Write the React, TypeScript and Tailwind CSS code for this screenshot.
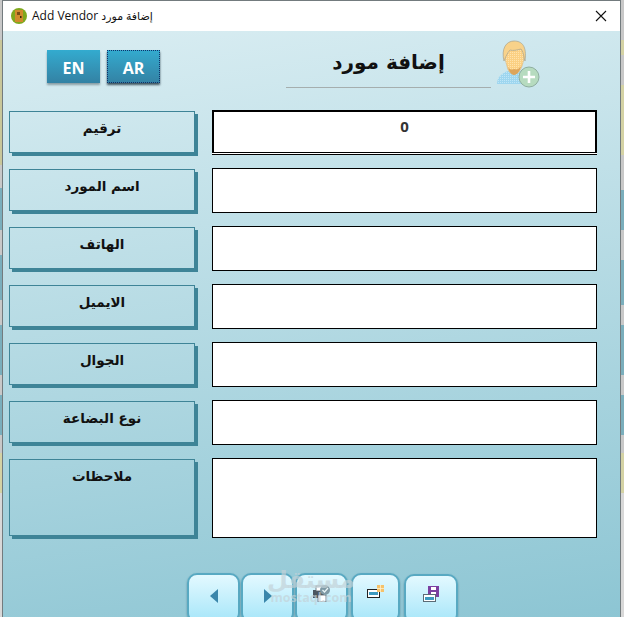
const rows = [
  { label: "ترقيم", value: "0" },
  { label: "اسم المورد", value: "" },
  { label: "الهاتف", value: "" },
  { label: "الايميل", value: "" },
  { label: "الجوال", value: "" },
  { label: "نوع البضاعة", value: "" },
];

const arabic = "font-['DejaVu_Sans',sans-serif]";

const PersonAdd = () => (
  <svg width="46" height="48" viewBox="0 0 46 48" className="block">
    <defs>
      <pattern id="dots" width="2" height="2" patternUnits="userSpaceOnUse">
        <rect width="2" height="2" fill="#fbd083" />
        <rect width="1" height="1" fill="#ffe3ad" />
      </pattern>
      <pattern id="shirt" width="2" height="2" patternUnits="userSpaceOnUse">
        <rect width="2" height="2" fill="#9ed6ef" />
        <rect width="1" height="1" fill="#bfe6f7" />
      </pattern>
    </defs>
    <path d="M1 44c0-7 5-11 11-13l4-1 8 1c5 2 8 5 9 13z" fill="url(#shirt)" />
    <path d="M9 16c0-6 4-9 10-9s9 3 9 9c0 3-1 7-2 10-2 5-4 8-8 8s-6-3-7-8c-1-3-2-7-2-10z" fill="url(#dots)" stroke="#d7ad6f" strokeWidth="0.5" />
    <path d="M12 27c2 3 4 3 6 2 3 1 5 0 7-3-1 5-4 9-7 9s-5-4-6-8z" fill="#dca55c" />
    <path d="M8 21C5 9 10 1 18 1c8 0 13 5 11 20-1-2-1-8-4-12-4 1-8 2-11 1-2 2-4 6-6 11z" fill="#f8d28a" stroke="#a8a48e" strokeWidth="0.7" />
    <circle cx="33" cy="37" r="10" fill="#b6dbbf" stroke="#8fae9f" strokeWidth="1" />
    <path d="M33 31v12M27 37h12" stroke="#fff" strokeWidth="2.6" />
  </svg>
);

const PrintIcon = () => (
  <svg width="18" height="17" viewBox="0 0 18 17">
    <rect x="0" y="5" width="11" height="8" fill="#4a5660" />
    <rect x="3" y="1" width="7" height="5" fill="#fff" stroke="#59636b" strokeWidth="0.8" />
    <rect x="5" y="10" width="8" height="7" fill="#fff" stroke="#59636b" strokeWidth="0.8" />
    <circle cx="12" cy="5" r="5" fill="#7f9aa6" />
    <path d="M9.5 5l2 2 3.5-4" fill="none" stroke="#e8f4f6" strokeWidth="1.2" />
  </svg>
);

const NewIcon = () => (
  <svg width="17" height="14" viewBox="0 0 17 14">
    <rect x="0.5" y="4.5" width="12" height="8" fill="#fff" stroke="#222" />
    <rect x="2" y="7" width="9" height="3" fill="#3d9ac0" />
    <rect x="10" y="0" width="7" height="7" fill="#f5c26b" />
    <path d="M13.5 0v7M10 3.5h7" stroke="#fff0cc" strokeWidth="0.8" />
  </svg>
);

const SaveIcon = () => (
  <svg width="16" height="16" viewBox="0 0 16 16">
    <rect x="5" y="0" width="11" height="11" fill="#7b3fa0" />
    <rect x="8" y="1" width="5" height="3" fill="#fff" />
    <rect x="8" y="6" width="5" height="4" fill="#fff" />
    <rect x="0.5" y="8.5" width="12" height="7" fill="#fff" stroke="#5b6b75" />
    <rect x="2" y="11" width="9" height="3" fill="#3d9ac0" />
  </svg>
);

const LangButton = ({ text, active }: { text: string; active?: boolean }) => (
  <div className={`flex h-[33px] w-[53px] items-center justify-center bg-gradient-to-b from-[#33abcf] to-[#3382a4] pt-[3px] font-['Open_Sans',sans-serif] text-[16px] font-bold text-white ${active ? "outline-1 outline-dotted -outline-offset-1 outline-[#10306a] shadow-[0_2px_2px_#3f5560]" : "shadow-[0_2px_2px_#8a9ea5]"}`}>
    {text}
  </div>
);

const NavButton = ({ className, children }: { className: string; children: React.ReactNode }) => (
  <div className={`flex h-[50px] items-start justify-center rounded-[10px] border-2 border-[#58a9c2] bg-gradient-to-b from-[#e3f9ff] to-[#a6e6f9] pt-[10px] shadow-[0_1px_2px_#5f8d9b] ${className}`}>
    {children}
  </div>
);

const Label = ({ text, tall }: { text: string; tall?: boolean }) => (
  <div dir="rtl" className={`flex w-[186px] shrink-0 justify-center border border-[#3e8497] pt-[6px] text-[13.5px] font-bold text-[#111] shadow-[3px_3px_0_#3e8497] ${arabic} ${tall ? "h-[77px]" : "h-[42px]"}`}>
    {text}
  </div>
);

export default function App() {
  return (
    <div className="flex h-[617px] w-[624px] overflow-hidden">
      <div className="w-[2px] shrink-0 bg-[linear-gradient(to_bottom,#c8c8c8_0_40px,#c9c79a_40px_165px,#c8c8c8_165px_188px,#7aaebc_188px_230px,#c8c8c8_230px_255px,#7aaebc_255px_300px,#c8c8c8_300px_325px,#7aaebc_325px_375px,#c8c8c8_375px_395px,#7aaebc_395px_435px,#c8c8c8_435px_453px,#d4d2a4_453px_493px,#d8d8d8_493px)]" />
      <div className="flex h-full w-[619px] shrink-0 flex-col border-x border-t border-[#737b7e] bg-white">
        <div className="flex h-[30px] shrink-0 items-center pl-[8px] pr-[13px] font-['Open_Sans','DejaVu_Sans',sans-serif] text-[12px] text-[#111]">
          <svg width="16" height="16" viewBox="0 0 16 16" className="mr-[5px]">
            <circle cx="8" cy="8" r="8" fill="#7fa81d" />
            <rect x="4" y="2" width="8" height="12" fill="#d08a2c" />
            <rect x="6" y="4" width="3" height="3" fill="#7a4c16" />
            <rect x="9" y="8" width="1.5" height="2" fill="#3a2508" />
          </svg>
          <span>Add Vendor <span className="text-[11px]">إضافة مورد</span></span>
          <svg width="12" height="12" viewBox="0 0 12 12" className="ml-auto">
            <path d="M1 1l10 10M11 1L1 11" stroke="#111" strokeWidth="1.1" />
          </svg>
        </div>

        <div className="relative flex-1 bg-[linear-gradient(172deg,#d9edf2,#8cc5d3)] px-[6px]">
          <div className="flex h-[79px] items-start">
            <div className="ml-[38px] mt-[19px] flex gap-[7px]">
              <LangButton text="EN" />
              <LangButton text="AR" active />
            </div>
            <div dir="rtl" className={`ml-[126px] mt-[14px] flex h-[43px] w-[205px] justify-center border-b border-[#a5aeae] pt-[2px] text-[20px] font-bold text-[#111] ${arabic}`}>
              إضافة مورد
            </div>
            <div className="ml-[5px] mt-[9px]">
              <PersonAdd />
            </div>
          </div>

          <div className="flex flex-col gap-[13px]">
            {rows.map((row, i) => (
              <div key={row.label} className="flex items-start gap-[17px]">
                <div className="pt-[1px]">
                  <Label text={row.label} />
                </div>
                {i === 0 ? (
                  <div className="mb-[2px] flex h-[43px] w-[385px] justify-center border-2 border-b border-black bg-white pt-[3px] font-['Open_Sans',sans-serif] text-[15px] font-bold text-[#333] shadow-[0_1px_0_#fff,0_2px_0_#000]">
                    {row.value}
                  </div>
                ) : (
                  <div className="h-[45px] w-[385px] border border-black bg-white" />
                )}
              </div>
            ))}
            <div className="flex items-start gap-[17px]">
              <div className="pt-[1px]">
                <Label text="ملاحظات" tall />
              </div>
              <div className="h-[80px] w-[385px] border border-black bg-white" />
            </div>
          </div>

          <div className="mt-[35px] ml-[178px] flex items-start">
            <NavButton className="w-[53px]">
              <svg width="10" height="14" viewBox="0 0 10 14" className="mt-[4px]"><path d="M9 0v14L1 7z" fill="#3a86ab" /></svg>
            </NavButton>
            <NavButton className="ml-[1px] w-[53px]">
              <svg width="10" height="14" viewBox="0 0 10 14" className="mt-[4px]"><path d="M1 0v14l8-7z" fill="#3a86ab" /></svg>
            </NavButton>
            <NavButton className="ml-[1px] w-[53px]"><PrintIcon /></NavButton>
            <NavButton className="ml-[3px] w-[49px]"><NewIcon /></NavButton>
            <NavButton className="ml-[4px] mt-[1px] w-[54px]"><SaveIcon /></NavButton>
          </div>

          <div dir="rtl" className={`pointer-events-none absolute left-[269px] top-[537px] flex w-[78px] flex-col items-center text-[#c3d2d8]/70 ${arabic}`}>
            <span className="text-[24px] font-bold leading-[24px]">مستقل</span>
            <span dir="ltr" className="font-['Open_Sans',sans-serif] text-[12.5px] font-bold leading-[12px]">mostaql.com</span>
          </div>
        </div>
      </div>
      <div className="w-[3px] shrink-0 bg-[linear-gradient(to_bottom,#c8c8c8_0_40px,#d4d2a4_40px_55px,#c8c8c8_55px_85px,#d4d2a4_85px_155px,#c8c8c8_155px_190px,#7aaebc_190px_230px,#c8c8c8_230px_260px,#7aaebc_260px_305px,#c8c8c8_305px_325px,#7aaebc_325px_375px,#c8c8c8_375px_395px,#7aaebc_395px_435px,#c8c8c8_435px_453px,#d4d2a4_453px_493px,#d8d8d8_493px)]" />
    </div>
  );
}
